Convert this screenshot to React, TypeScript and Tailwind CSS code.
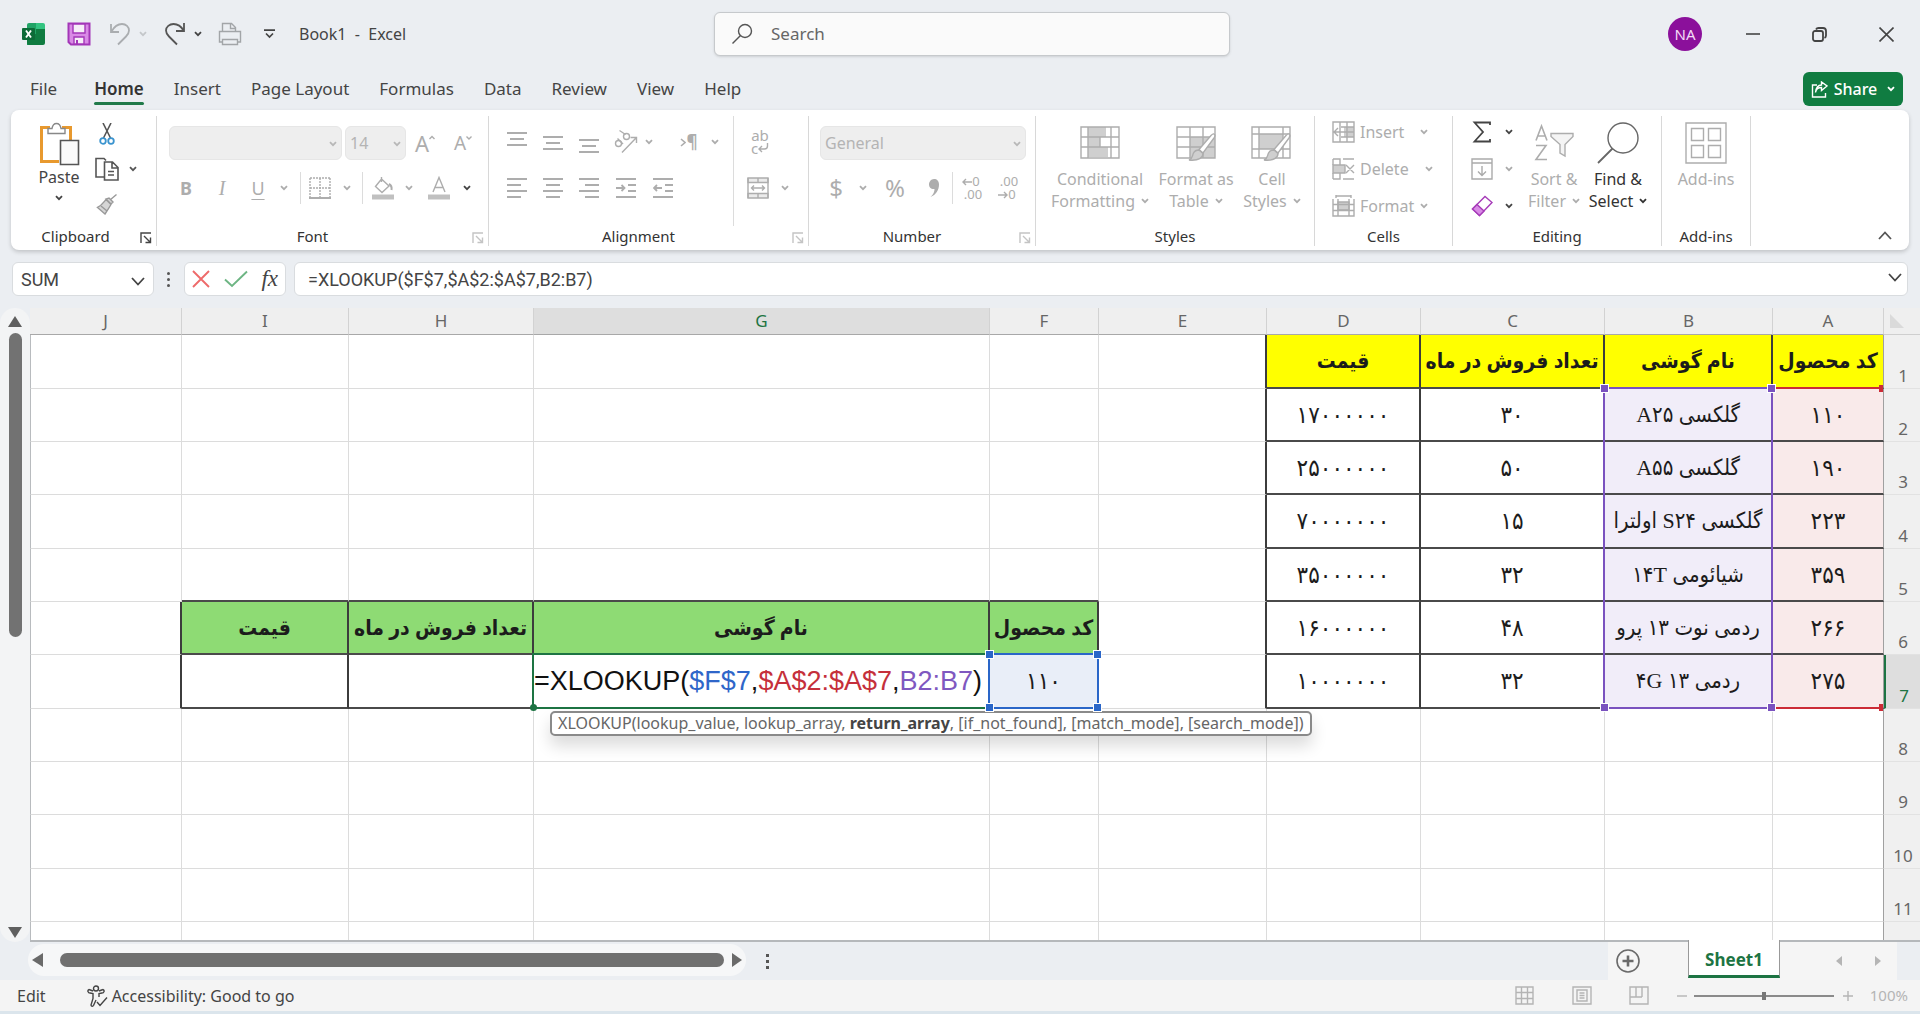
import React from "react";

const UI_FONT = "font-['Noto_Sans','Open_Sans',sans-serif]";
const CELL_FONT = "font-['Liberation_Serif','DejaVu_Sans_Condensed','DejaVu_Sans',serif]";

type IconProps = {
  w: number;
  h: number;
  className?: string;
  children: React.ReactNode;
};

const Icon: React.FC<IconProps> = ({ w, h, className = "", children }) => (
  <svg
    width={w}
    height={h}
    viewBox={`0 0 ${w} ${h}`}
    fill="none"
    stroke="currentColor"
    strokeWidth="1.4"
    className={`shrink-0 ${className}`}
    aria-hidden="true"
  >
    {children}
  </svg>
);

const Chevron: React.FC<{ className?: string }> = ({ className = "" }) => (
  <Icon w={8} h={6} className={className}>
    <path d="M1 1.2 4 4.2 7 1.2" strokeWidth="1.8" />
  </Icon>
);

type ToolProps = {
  label: string;
  className?: string;
  children: React.ReactNode;
};

const Tool: React.FC<ToolProps> = ({ label, className = "", children }) => (
  <button aria-label={label} className={`flex shrink-0 items-center justify-center ${className}`}>
    {children}
  </button>
);

type GroupProps = {
  name: string;
  className: string;
  launcher?: string;
  children: React.ReactNode;
};

const Group: React.FC<GroupProps> = ({ name, className, launcher, children }) => (
  <section
    aria-label={name}
    className={`relative mt-1.5 mb-1 flex shrink-0 flex-col border-r border-[#d8d8d8] ${className}`}
  >
    <div className="flex flex-1">{children}</div>
    <div className="flex h-5 items-center justify-center text-[15px] leading-5 text-[#333]">{name}</div>
    {launcher && (
      <button aria-label={name + " settings"} className={`absolute right-1 bottom-0.5 ${launcher}`}>
        <Icon w={12} h={12}>
          <path d="M1 11V1h10M4 4l6 6M10.500 5.500v5H5.500" />
        </Icon>
      </button>
    )}
  </section>
);

const ribbonTabs = ["Insert", "Page Layout", "Formulas", "Data", "Review", "View", "Help"];

const TitleBar: React.FC = () => (
  <header className="flex h-[68px] items-center text-[#444]">
    <div className="flex w-[714px] shrink-0 items-center pl-[22px]">
      <svg width="24" height="24" viewBox="0 0 24 24" aria-label="Excel">
        <path d="M7 1h8v22H5V3a2 2 0 0 1 2-2z" fill="#21a366" />
        <path d="M14 1h7a2 2 0 0 1 2 2v4h-9z" fill="#33c481" />
        <path d="M5 12h18v9a2 2 0 0 1-2 2H7a2 2 0 0 1-2-2z" fill="#107c41" />
        <path d="M14 7h9v5h-9z" fill="#107c41" />
        <rect x="0" y="6" width="13" height="12" rx="1" fill="#0d6b38" />
        <path d="M4 8.500l5 7M9 8.500l-5 7" stroke="#fff" strokeWidth="1.900" />
      </svg>
      <Tool label="Save" className="ml-[21px] text-[#a336b8]">
        <Icon w={24} h={24}>
          <path d="M1.500 1.500h21v21H4l-2.500-2.500z" fill="#d98ae6" strokeWidth="2" />
          <path d="M6 2h12v9H6z" fill="#f6eef8" />
          <path d="M7 22v-7h10v7z" fill="#f6eef8" />
          <path d="M10 22v-4" strokeWidth="2" />
        </Icon>
      </Tool>
      <Tool label="Undo" className="ml-[18px] text-[#aaadb0]">
        <Icon w={22} h={24}>
          <path d="M2 2v8h8M2.500 9.500C5 5 8 2 13 2c4 0 7 3 7 6.500 0 2.500-1 4-3 6L9 22.500" strokeWidth="1.800" />
        </Icon>
      </Tool>
      <Chevron className="ml-2 text-[#c4c7ca]" />
      <Tool label="Redo" className="ml-[17px] text-[#555]">
        <Icon w={22} h={24}>
          <path d="M20 1v8h-8M19.500 8.500C17 4 14 2 9.500 2 5.500 2 2 5 2 8.500c0 2.500 1 4 3 6l8 8" strokeWidth="1.800" />
        </Icon>
      </Tool>
      <Chevron className="ml-2" />
      <Tool label="Quick print" className="ml-[16px] text-[#a2a5a8]">
        <Icon w={24} h={24}>
          <path d="M4.500 9V1.500h9l4 4V9M12.500 2v4.500h5M4 20H1.500V9.500h21V20H20" />
          <path d="M4.500 17.500h15v5h-15z" />
        </Icon>
      </Tool>
      <Tool label="Customize toolbar" className="ml-[22px]">
        <Icon w={11} h={10}>
          <path d="M0 1.200h11M2 4.500l3.500 3.500L9 4.500" strokeWidth="1.700" />
        </Icon>
      </Tool>
      <span className="ml-6 text-[16px] whitespace-pre">Book1  -  Excel</span>
    </div>
    <label className="flex h-[44px] w-[516px] items-center rounded-md border border-[#c6c9cc] bg-[#fafafa] pl-4 shadow-sm">
      <Icon w={22} h={22} className="text-[#555]">
        <circle cx="14" cy="8" r="6.500" />
        <path d="M9.500 12.500 1.500 20.500" />
      </Icon>
      <input
        aria-label="Search"
        placeholder="Search"
        className="ml-[18px] flex-1 bg-transparent text-[17px] outline-none placeholder:text-[#666]"
      />
    </label>
    <div className="flex flex-1 items-center justify-end pr-[26px]">
      <button className="mr-[44px] h-[34px] w-[34px] rounded-full bg-[#8b109b] text-[15px] text-[#f3d8f6]">NA</button>
      <Tool label="Minimize" className="w-[14px]">
        <Icon w={14} h={14}>
          <path d="M0 7h14" strokeWidth="1.600" />
        </Icon>
      </Tool>
      <Tool label="Restore" className="ml-[52px]">
        <Icon w={15} h={15}>
          <rect x="1" y="4" width="10" height="10" rx="2" strokeWidth="1.800" />
          <path d="M4 2.500C4.500 1.500 5 1 6.500 1H11c2 0 3 1 3 3v4.500c0 1.500-.5 2-1.500 2.500" strokeWidth="1.800" />
        </Icon>
      </Tool>
      <Tool label="Close" className="ml-[52px]">
        <Icon w={15} h={15}>
          <path d="M.5.5l14 14M14.500.5l-14 14" strokeWidth="1.600" />
        </Icon>
      </Tool>
    </div>
  </header>
);

const MenuBar: React.FC = () => (
  <nav className="flex h-[42px] items-center pr-[17px] pl-[30px] text-[17px] text-[#444]">
    <button className="mr-[37px]">File</button>
    <button className="relative mr-[30px] font-semibold text-[#333]">
      Home
      <span className="absolute inset-x-0 -bottom-[3px] h-[3px] rounded bg-[#217a4a]" />
    </button>
    <div className="flex gap-[30px]">
      {ribbonTabs.map((tab) => (
        <button key={tab}>{tab}</button>
      ))}
    </div>
    <button className="ml-auto flex h-[34px] w-[100px] items-center justify-center gap-1.5 rounded-md bg-[#107c41] text-[16px] font-medium text-white">
      <Icon w={17} h={17}>
        <path d="M6 4H1.500v12h13v-4M4.500 11.500C5 8 7 6.500 10.500 6.500V9.500L16 5 10.500 1v3C7 4 5 7 4.500 11.500z" />
      </Icon>
      Share
      <Chevron className="ml-1" />
    </button>
  </nav>
);

const Combo: React.FC<{ label: string; value: string; className: string }> = ({ label, value, className }) => (
  <div className={`relative h-[34px] rounded-md border border-[#e6e6e6] bg-[#eee] ${className}`}>
    <select
      aria-label={label}
      disabled
      className="h-full w-full appearance-none bg-transparent pl-1 text-[16px] text-[#b4b4b4] opacity-100"
    >
      <option>{value}</option>
    </select>
    <Chevron className="pointer-events-none absolute top-[14px] right-1 text-[#b8b8b8]" />
  </div>
);

const Lines: React.FC<{ d: string }> = ({ d }) => (
  <Icon w={20} h={22}>
    <path d={d} strokeWidth="1.800" />
  </Icon>
);

const Brush = () => (
  <>
    <path d="M38 10c1.500 1 1 2.500 0 4L27 29l-4-3.500 12-14c1-1 2-2 3-1.500z" fill="#fff" />
    <path d="M23 26l4 3.500c0 4-4 7.500-14 6.500 4-1.500 3-4 4.500-7 1-2 3-3 5.500-3z" fill="#cfcfcf" />
  </>
);

const BigLabel: React.FC<{ top: string; bottom: string }> = ({ top, bottom }) => (
  <span className="mt-1.5 flex flex-col items-center text-[16px] leading-[22px] whitespace-nowrap">
    <span>{top}</span>
    <span className="flex items-center gap-1.5">
      {bottom}
      <Chevron />
    </span>
  </span>
);

const Ribbon: React.FC = () => (
  <div className="mx-[11px] flex h-[140px] rounded-lg bg-white text-[#adadad] shadow-[0_2px_4px_rgba(0,0,0,0.18)]">
    <Group name="Clipboard" className="w-[146px] pr-4" launcher="text-[#444]">
      <button className="ml-[27px] flex w-[42px] flex-col items-center pt-1.5 text-[16px] leading-[22px] text-[#444]">
        <Icon w={42} h={44}>
          <path d="M12 5.500H3.500v34H21M24 5.500h8.500V18" stroke="#e8992e" strokeWidth="3" />
          <path d="M10 11.500V6.500h4c.5-3 2-5 4.500-5s4 2 4.500 5h4v5z" fill="#fff" stroke="#888" />
          <path d="M22.500 18.500h18v24h-18z" fill="#fafafa" stroke="#555" strokeWidth="1.600" />
        </Icon>
        <span>Paste</span>
        <Chevron className="mt-[7px]" />
      </button>
      <div className="ml-[11px] flex flex-col items-start gap-[11px] pt-1.5 text-[#555]">
        <Tool label="Cut" className="h-6 w-8">
          <Icon w={16} h={22}>
            <path d="M4 0l7.500 15M12 0 4.500 15" strokeWidth="1.600" />
            <circle cx="4" cy="18" r="2.800" stroke="#3b94cf" strokeWidth="1.800" />
            <circle cx="12" cy="18" r="2.800" stroke="#3b94cf" strokeWidth="1.800" />
          </Icon>
        </Tool>
        <div className="flex items-center">
          <Tool label="Copy" className="h-6 w-8">
            <Icon w={24} h={24}>
              <path d="M9 20H1V1.500h8l2 2M9.500 5h8l5.500 5.500V23H9.500zM17 5v6h6M13 14.500h6M13 18h6" strokeWidth="1.600" />
            </Icon>
          </Tool>
          <Chevron className="ml-1.5" />
        </div>
        <Tool label="Format painter" className="h-6 w-8 text-[#999]">
          <Icon w={22} h={22}>
            <path d="M20.500 1.500 14 7M13 5l4 4-2 2-5-5zM10 6.500l5 5C13 15 11 18 9 21L1.500 14.500c4-2 6-5 8.500-8z" fill="#d6d6d6" />
            <path d="M5 13l6 5" />
          </Icon>
        </Tool>
      </div>
    </Group>

    <Group name="Font" className="w-[332px] pr-5" launcher="text-[#c4c4c4]">
      <div className="ml-3 flex flex-col pt-2.5">
        <div className="flex items-center">
          <Combo label="Font name" value="" className="w-[173px]" />
          <Combo label="Font size" value="14" className="ml-[3px] w-[61px]" />
          <Tool label="Increase font size" className="ml-2 w-[22px] text-[22px] leading-6">
            <span>A</span>
            <Icon w={6} h={16}>
              <path d="M.5 4 3 1.500 5.500 4" />
            </Icon>
          </Tool>
          <Tool label="Decrease font size" className="ml-4 w-[22px] text-[19px] leading-6">
            <span>A</span>
            <Icon w={6} h={16}>
              <path d="M.5 1.500 3 4l2.500-2.500" />
            </Icon>
          </Tool>
        </div>
        <div className="mt-3 flex h-8 items-center text-[18px]">
          <Tool label="Bold" className="w-[34px] font-bold">B</Tool>
          <Tool label="Italic" className="w-[38px] font-['Liberation_Serif',serif] text-[20px] italic">I</Tool>
          <Tool label="Underline" className="w-[34px] underline underline-offset-4">U</Tool>
          <Chevron className="mx-[5px]" />
          <span className="mx-[7px] h-8 w-px bg-[#dcdcdc]" />
          <Tool label="Borders" className="w-6">
            <Icon w={22} h={22}>
              <path d="M1 1h20M1 1v20M21 1v20M11 1v20M1 11h20" strokeDasharray="2 1" />
              <path d="M0 21h22" strokeWidth="2" />
            </Icon>
          </Tool>
          <Chevron className="mx-[11px]" />
          <span className="h-8 w-px bg-[#dcdcdc]" />
          <Tool label="Fill color" className="w-10">
            <Icon w={24} h={24}>
              <path d="M10.500 1v5M10.500 3 18 10l-7 6.500L4.500 10.500z" />
              <path d="M18 8c2 1 3 3 2.500 6" strokeWidth="2" />
              <path d="M1 21h22" strokeWidth="5" stroke="#c0c0c0" />
            </Icon>
          </Tool>
          <Chevron className="mx-0.5" />
          <Tool label="Font color" className="w-12">
            <Icon w={24} h={24}>
              <path d="M6 16 12 1.500 18 16M8 11.500h8" />
              <path d="M1 21h22" strokeWidth="5" stroke="#c0c0c0" />
            </Icon>
          </Tool>
          <Chevron className="text-[#444]" />
        </div>
      </div>
    </Group>

    <Group name="Alignment" className="w-[320px] pr-5" launcher="text-[#c4c4c4]">
      <div className="ml-[10px] flex w-[235px] shrink-0 flex-col border-r border-[#dcdcdc] pt-2">
        <div className="flex h-9 items-center">
          <Tool label="Top align" className="w-9">
            <Lines d="M0 2h20M3 8h14M0 14h20" />
          </Tool>
          <Tool label="Middle align" className="w-9">
            <Lines d="M0 6h20M3 12h14M0 18h20" />
          </Tool>
          <Tool label="Bottom align" className="w-9">
            <Lines d="M0 9h20M3 15h14M0 21h20" />
          </Tool>
          <Tool label="Orientation" className="w-[38px]">
            <Icon w={26} h={26}>
              <path d="M9 23.500 23 9M17.500 8.500H23.500V14" />
              <circle cx="5.500" cy="14.500" r="3" />
              <path d="M4.500 9.500l5.500 5.500" />
              <circle cx="13.500" cy="7.500" r="3" />
              <path d="M6.500 1.500l6 4" />
            </Icon>
          </Tool>
          <Chevron />
          <Tool label="Text direction" className="ml-5 w-8 text-[17px] font-bold">
            <Icon w={6} h={9}>
              <path d="M1 1l4 3.500L1 8" strokeWidth="1.600" />
            </Icon>
            ¶
          </Tool>
          <Chevron className="ml-1.5" />
        </div>
        <div className="mt-2.5 flex h-9 items-center">
          <Tool label="Align left" className="w-9">
            <Lines d="M0 2h20M0 8h14M0 14h20M0 20h14" />
          </Tool>
          <Tool label="Center" className="w-9">
            <Lines d="M0 2h20M3 8h14M0 14h20M3 20h14" />
          </Tool>
          <Tool label="Align right" className="w-9">
            <Lines d="M0 2h20M6 8h14M0 14h20M6 20h14" />
          </Tool>
          <Tool label="Increase indent" className="w-[38px]">
            <Lines d="M0 2h20M12 8h8M12 14h8M0 20h20M0 11h8M5.500 8 8.500 11l-3 3" />
          </Tool>
          <Tool label="Decrease indent" className="w-9">
            <Lines d="M0 2h20M12 8h8M12 14h8M0 20h20M9 11H1M4 8 1 11l3 3" />
          </Tool>
        </div>
      </div>
      <div className="ml-3 flex shrink-0 flex-col pt-2">
        <Tool label="Wrap text" className="h-9 w-7 flex-col text-[15px] leading-[13px]">
          <span>ab</span>
          <span className="flex items-center">
            c
            <Icon w={11} h={11}>
              <path d="M9.500 0v3c0 2-1 3-3 3H1M4 3 1 6l3 3" />
            </Icon>
          </span>
        </Tool>
        <div className="mt-2.5 flex h-9 items-center">
          <Tool label="Merge and center" className="w-6">
            <Icon w={22} h={22}>
              <path d="M1 1h20v4.500H1zM1 16.500h20V21H1z" fill="#ebebeb" />
              <path d="M1 1v20M21 1v20M11 1v4.500M11 16.500V21M4.500 11h13M7 8.500 4.500 11 7 13.500M15 8.500l2.500 2.500-2.500 2.500" />
            </Icon>
          </Tool>
          <Chevron className="ml-[11px]" />
        </div>
      </div>
    </Group>

    <Group name="Number" className="w-[227px] pr-5" launcher="text-[#c4c4c4]">
      <div className="ml-[11px] flex flex-col pt-2.5">
        <Combo label="Number format" value="General" className="w-[206px]" />
        <div className="mt-3 flex h-8 items-center">
          <Tool label="Currency" className="w-8 text-[24px]">$</Tool>
          <Chevron className="mx-[7px]" />
          <Tool label="Percent" className="w-[42px] text-[24px]">%</Tool>
          <Tool label="Comma style" className="w-9">
            <Icon w={12} h={20}>
              <path d="M6 1c3 0 5 2 5 5.500C11 12 8 17 2.500 19c3-3 4-5 4-8C3 11.500 1 9 1 6.500S3 1 6 1z" fill="currentColor" stroke="none" />
            </Icon>
          </Tool>
          <span className="h-8 w-px bg-[#dcdcdc]" />
          <Tool label="Increase decimal" className="w-9 flex-col text-[13px] leading-[13px]">
            <span className="flex items-center">
              <Icon w={10} h={8}>
                <path d="M10 4H1M4 1 1 4l3 3" />
              </Icon>
              0
            </span>
            <span className="pl-1">.00</span>
          </Tool>
          <Tool label="Decrease decimal" className="w-9 flex-col text-[13px] leading-[13px]">
            <span className="pl-1">.00</span>
            <span className="flex items-center">
              <Icon w={10} h={8}>
                <path d="M0 4h9M6 1l3 3-3 3" />
              </Icon>
              0
            </span>
          </Tool>
        </div>
      </div>
    </Group>

    <Group name="Styles" className="w-[279px]">
      <button className="ml-[10px] flex w-[108px] flex-col items-center pt-2">
        <Icon w={40} h={38}>
          <path d="M8 3h18v10H8zM8 13h12v10H8zM8 23h20v10H8z" fill="#cfcfcf" stroke="none" />
          <path d="M1 3h38v31H1zM8 3v31M31 3v31M1 13h38M1 23h38M20 13v10" />
        </Icon>
        <BigLabel top="Conditional" bottom="Formatting" />
      </button>
      <button className="flex w-[84px] flex-col items-center pt-2">
        <Icon w={40} h={38}>
          <path d="M14 13h25v21H14z" fill="#cfcfcf" stroke="none" />
          <path d="M1 3h38v31H1zM14 3v31M27 3v31M1 13h38M1 23h38" />
          <Brush />
        </Icon>
        <BigLabel top="Format as" bottom="Table" />
      </button>
      <button className="flex w-[68px] flex-col items-center pt-2">
        <Icon w={42} h={38}>
          <path d="M8 10h24v15H8z" fill="#cfcfcf" stroke="none" />
          <path d="M1 3h38v31H1zM8 3v31M1 10h38M1 25h38M32 3v31" />
          <Brush />
        </Icon>
        <BigLabel top="Cell" bottom="Styles" />
      </button>
    </Group>

    <Group name="Cells" className="w-[138px]">
      <div className="ml-[17px] flex flex-col gap-[13px] pt-1 text-[16px] leading-6">
        <button className="flex items-center">
          <Icon w={23} h={22}>
            <path d="M12 6h10v10H12z" fill="#cfcfcf" stroke="none" />
            <path d="M1 1h21v20H1zM8 1v20M15 1v20M9 6h13M9 16h13M22 11H2M6 7l-4 4 4 4" />
          </Icon>
          <span className="ml-[5px] w-[60px] text-left">Insert</span>
          <Chevron />
        </button>
        <button className="flex items-center">
          <Icon w={23} h={22}>
            <path d="M1 7h12v8H1z" fill="#cfcfcf" />
            <path d="M1 1h7v6M1 1v6M1 21v-6M1 21h7v-6M11 1h11M11 21h11M14 7l8 8M22 7l-8 8" />
          </Icon>
          <span className="ml-[5px] w-[65px] text-left">Delete</span>
          <Chevron />
        </button>
        <button className="flex items-center">
          <Icon w={23} h={22}>
            <path d="M6 7h11v8H6z" fill="#cfcfcf" />
            <path d="M1 4v17h21V4M6 4v17M17 4v17M1 9.500h21M1 15.500h21M4 1h15M4-1v4M19-1v4" />
          </Icon>
          <span className="ml-[5px] w-[60px] text-left">Format</span>
          <Chevron />
        </button>
      </div>
    </Group>

    <Group name="Editing" className="w-[209px]">
      <div className="ml-[18px] flex w-[42px] flex-col gap-[13px] pt-1 text-[#444]">
        <button aria-label="AutoSum" className="flex h-6 items-center justify-between">
          <Icon w={22} h={22}>
            <path d="M19 4V1.500H3.500L12 11l-8.500 9.500H19V18" strokeWidth="1.800" />
          </Icon>
          <Chevron />
        </button>
        <button aria-label="Fill" className="flex h-6 items-center justify-between text-[#aaa]">
          <Icon w={22} h={22}>
            <path d="M1 1h20v20H1zM1 5h20M11 8v9M7 13.500l4 4 4-4" />
          </Icon>
          <Chevron />
        </button>
        <button aria-label="Clear" className="flex h-6 items-center justify-between">
          <Icon w={22} h={22} className="text-[#a63bb8]">
            <path d="M1.500 14 14 1.500l7 6L8.500 20.500z" fill="#fff" />
            <path d="M1.500 14 6 9.500l7 6.500-4.500 4.500z" fill="#d98ae6" />
          </Icon>
          <Chevron />
        </button>
      </div>
      <button className="ml-3 flex w-[58px] flex-col items-center pt-2">
        <Icon w={42} h={38}>
          <path d="M3 16.500 8.500 2 14 16.500M5 12h7M3 21.500h10L3 35.500h11" strokeWidth="1.600" />
          <path d="M18 9.500h22v3l-8 8V32l-5-3v-8.500l-9-8z" fill="#f4f4f4" />
        </Icon>
        <BigLabel top="Sort &" bottom="Filter" />
      </button>
      <button className="ml-[5px] flex w-[60px] flex-col items-center pt-1.5 text-[#333]">
        <Icon w={44} h={42}>
          <circle cx="27" cy="16" r="15" stroke="#666" />
          <path d="M16.500 26.500 2 41" stroke="#666" strokeWidth="1.800" />
        </Icon>
        <span className="-mt-0.5">
          <BigLabel top="Find &" bottom="Select" />
        </span>
      </button>
    </Group>

    <Group name="Add-ins" className="w-[89px]">
      <button className="mx-auto flex flex-col items-center pt-1.5 text-[16px] leading-[22px]">
        <Icon w={42} h={42}>
          <path d="M1 1h40v40H1zM6.500 6.500h12v12h-12zM23.500 6.500h12v12h-12zM6.500 23.500h12v12h-12zM23.500 23.500h12v12h-12z" />
        </Icon>
        <span className="mt-1">Add-ins</span>
      </button>
    </Group>

    <button aria-label="Collapse ribbon" className="mt-auto mr-[17px] mb-2.5 ml-auto text-[#555]">
      <Icon w={14} h={9}>
        <path d="M1 8l6-6.500L13 8" strokeWidth="1.800" />
      </Icon>
    </button>
  </div>
);

const FormulaBar: React.FC = () => (
  <div className="mx-[12px] my-3 flex h-[34px] shrink-0 items-center text-[#444]">
    <div className="relative h-full w-[142px] rounded-md border border-[#d9dcdf] bg-white">
      <input
        aria-label="Name box"
        defaultValue="SUM"
        className="h-full w-full bg-transparent pl-2 font-['Roboto',sans-serif] text-[18px] outline-none"
      />
      <Icon w={14} h={9} className="pointer-events-none absolute top-3.5 right-2">
        <path d="M1 1l6 6.500L13 1" strokeWidth="1.800" />
      </Icon>
    </div>
    <div className="mx-[13px] flex w-1 flex-col gap-[3px]">
      <span className="h-[3px] w-[3px] rounded-full bg-[#555]" />
      <span className="h-[3px] w-[3px] rounded-full bg-[#555]" />
      <span className="h-[3px] w-[3px] rounded-full bg-[#555]" />
    </div>
    <div className="flex h-full w-[102px] items-center justify-between rounded-md border border-[#d9dcdf] bg-white px-[7px]">
      <Tool label="Cancel" className="text-[#ee6a6a]">
        <Icon w={18} h={18}>
          <path d="M1 1l16 16M17 1 1 17" strokeWidth="1.900" />
        </Icon>
      </Tool>
      <Tool label="Enter" className="text-[#6db583]">
        <Icon w={24} h={18}>
          <path d="M1 9.500 8 16 23 1.500" strokeWidth="1.900" />
        </Icon>
      </Tool>
      <Tool label="Insert function" className="font-['Liberation_Serif',serif] text-[23px] leading-6 italic">
        fx
      </Tool>
    </div>
    <div className="relative ml-2 h-full flex-1 rounded-md border border-[#d9dcdf] bg-white">
      <input
        aria-label="Formula"
        defaultValue="=XLOOKUP($F$7,$A$2:$A$7,B2:B7)"
        className="h-full w-full bg-transparent pl-[13px] font-['Roboto',sans-serif] text-[18px] outline-none"
      />
      <Icon w={14} h={9} className="pointer-events-none absolute top-2.5 right-[5px]">
        <path d="M1 1l6 6.500L13 1" strokeWidth="1.800" />
      </Icon>
    </div>
  </div>
);

// The sheet is right-to-left: column A sits at the right edge.
const columns = ["J", "I", "H", "G", "F", "E", "D", "C", "B", "A"];
const rows = [1, 2, 3, 4, 5, 6, 7, 8, 9, 10, 11];

const cells: Record<string, string> = {
  A1: "کد محصول",
  B1: "نام گوشی",
  C1: "تعداد فروش در ماه",
  D1: "قیمت",
  A2: "۱۱۰",
  B2: "گلکسی A۲۵",
  C2: "۳۰",
  D2: "۱۷۰۰۰۰۰۰",
  A3: "۱۹۰",
  B3: "گلکسی A۵۵",
  C3: "۵۰",
  D3: "۲۵۰۰۰۰۰۰",
  A4: "۲۲۳",
  B4: "گلکسی S۲۴ اولترا",
  C4: "۱۵",
  D4: "۷۰۰۰۰۰۰۰",
  A5: "۳۵۹",
  B5: "شیائومی ۱۴T",
  C5: "۳۲",
  D5: "۳۵۰۰۰۰۰۰",
  A6: "۲۶۶",
  B6: "ردمی نوت ۱۳ پرو",
  C6: "۴۸",
  D6: "۱۶۰۰۰۰۰۰",
  A7: "۲۷۵",
  B7: "ردمی ۱۳ ۴G",
  C7: "۳۲",
  D7: "۱۰۰۰۰۰۰۰",
  F6: "کد محصول",
  G6: "نام گوشی",
  H6: "تعداد فروش در ماه",
  I6: "قیمت",
  F7: "۱۱۰",
};

const inTable = (col: string | undefined, row: number) => {
  if (!col) return false;
  if ("ABCD".includes(col)) return row >= 1 && row <= 7;
  if ("FGHI".includes(col)) return row === 6 || row === 7;
  return false;
};

const cellStyle = (col: string, row: number) => {
  if (!inTable(col, row)) return "";
  if (row === 1) return "bg-[#ffff00] text-[21px] font-bold";
  if (row === 6 && "FGHI".includes(col)) return "bg-[#8edb74] text-[21px] font-bold";
  if (col === "A") return "bg-[#f9eaea] text-[24px]";
  if (col === "B") return "bg-[#f1edf9] text-[22px]";
  if (col === "F") return "bg-[#e9eef8] text-[24px]";
  return "text-[24px]";
};

const Handles: React.FC<{ color: string }> = ({ color }) => (
  <>
    <i className={`absolute -top-1 -left-1 h-[7px] w-[7px] outline outline-white ${color}`} />
    <i className={`absolute -top-1 -right-1 h-[7px] w-[7px] outline outline-white ${color}`} />
    <i className={`absolute -bottom-1 -left-1 h-[7px] w-[7px] outline outline-white ${color}`} />
    <i className={`absolute -right-1 -bottom-1 h-[7px] w-[7px] outline outline-white ${color}`} />
  </>
);

const overlays: Record<string, React.ReactNode> = {
  A2: (
    <div className="pointer-events-none absolute inset-x-0 -top-[2px] z-10 h-[322px] border-y-2 border-[#cc2b36]">
      <i className="absolute -top-1 right-0 h-[7px] w-1 bg-[#cc2b36]" />
      <i className="absolute right-0 -bottom-1 h-[7px] w-1 bg-[#cc2b36]" />
    </div>
  ),
  B2: (
    <div className="pointer-events-none absolute -inset-x-[2px] -top-[2px] z-20 h-[322px] border-2 border-[#7a52bf]">
      <Handles color="bg-[#7a52bf]" />
    </div>
  ),
  F7: (
    <div className="pointer-events-none absolute -inset-x-[2px] -inset-y-[2px] z-20 border-2 border-[#2a66c8]">
      <Handles color="bg-[#2a66c8]" />
    </div>
  ),
};

const FormulaCell: React.FC = () => (
  <div className="absolute -inset-x-[2px] -inset-y-[2px] z-10 flex items-center border-2 border-[#1d7443] bg-white">
    <span className="font-['Liberation_Sans',Arial,sans-serif] text-[27px] leading-8 whitespace-nowrap text-[#111]">
      =XLOOKUP(<span className="text-[#2f66c9]">$F$7</span>,<span className="text-[#c5303b]">$A$2:$A$7</span>,<span className="text-[#7f58c0]">B2:B7</span>)
    </span>
    <i className="absolute -bottom-1 -left-1 h-[7px] w-[7px] rounded-full bg-[#1d7443]" />
    <div
      role="tooltip"
      className={`absolute top-[56px] left-4 rounded-[5px] border-2 border-[#8a8a8a] bg-white px-1.5 text-[16px] leading-[21px] whitespace-nowrap text-[#666] shadow-[0_10px_16px_rgba(0,0,0,0.14)] ${UI_FONT}`}
    >
      XLOOKUP(lookup_value, lookup_array, <b className="text-[#444]">return_array</b>, [if_not_found], [match_mode],
      [search_mode])
    </div>
  </div>
);

const colWidth: Record<string, string> = {
  J: "",
  I: "w-[167px]",
  H: "w-[185px]",
  G: "w-[456px]",
  F: "w-[109px]",
  E: "w-[168px]",
  D: "w-[154px]",
  C: "w-[184px]",
  B: "w-[168px]",
  A: "w-[111px]",
};

const Sheet: React.FC = () => (
  <main className="flex min-h-0 flex-1">
    <div className="flex w-[30px] shrink-0 flex-col items-center rounded-full bg-[#f3f4f5] py-2 text-[#5f5f5f]">
      <Tool label="Scroll up">
        <Icon w={14} h={11}>
          <path d="M7 0l7 11H0z" fill="currentColor" stroke="none" />
        </Icon>
      </Tool>
      <div className="mt-1.5 h-[304px] w-[13px] rounded-full bg-[#727272]" />
      <Tool label="Scroll down" className="mt-auto -mb-1">
        <Icon w={14} h={11}>
          <path d="M7 11l7-11H0z" fill="currentColor" stroke="none" />
        </Icon>
      </Tool>
    </div>
    <div className="min-w-0 flex-1 overflow-hidden border-b-2 border-[#b5b8bb] bg-white">
      <table className="w-full table-fixed border-separate border-spacing-0">
        <thead>
          <tr className="h-[27px] bg-[#efefef] text-[17px] leading-6 text-[#666]">
            {columns.map((col) => (
              <th
                key={col}
                scope="col"
                className={`border-r border-b border-[#d2d2d2] border-b-[#a8a8a8] p-0 font-normal ${colWidth[col]} ${
                  col === "G" ? "bg-[#dedede] text-[#1d7443]" : ""
                }`}
              >
                {col}
              </th>
            ))}
            <th className="w-[36px] border-b border-[#cfcfcf] p-0 pl-1.5">
              <Icon w={14} h={14}>
                <path d="M0 0v14h14z" fill="#dadada" stroke="none" />
              </Icon>
            </th>
          </tr>
        </thead>
        <tbody>
          {rows.map((row) => (
            <tr key={row} className={row % 3 === 1 ? "h-[54px]" : "h-[53px]"}>
              {columns.map((col, i) => {
                const dark = inTable(col, row);
                let right = "border-r border-r-[#dcdcdc]";
                if (col === "A") right = "border-r border-r-[#a0a0a0]";
                else if (dark || inTable(columns[i + 1], row)) right = "border-r-2 border-r-[#3c3c3c]";
                const bottom =
                  dark || inTable(col, row + 1) ? "border-b-2 border-b-[#4a4a4a]" : "border-b border-b-[#dcdcdc]";
                const left = col === "J" ? "border-l border-l-[#b8bbbe]" : "";
                return (
                  <td
                    key={col}
                    className={`relative p-0 text-center leading-7 whitespace-nowrap text-[#1c1c1c] ${CELL_FONT} ${right} ${bottom} ${left} ${cellStyle(col, row)}`}
                  >
                    {cells[col + row] && <bdi dir="rtl">{cells[col + row]}</bdi>}
                    {col === "G" && row === 7 && <FormulaCell />}
                    {overlays[col + row]}
                  </td>
                );
              })}
              <th
                scope="row"
                className={`border-b border-[#e2e2e2] p-0 pl-0.5 text-center align-bottom text-[17px] leading-6 font-normal ${
                  row === 7 ? "border-l-2 border-l-[#1d7443] bg-[#dedede] text-[#1d7443]" : "bg-[#f0f0f0] text-[#666]"
                }`}
              >
                {row}
              </th>
            </tr>
          ))}
          <tr className="h-[53px]">
            {columns.map((col) => (
              <td
                key={col}
                className={`border-r p-0 ${col === "J" ? "border-l border-l-[#b8bbbe]" : ""} ${
                  col === "A" ? "border-r-[#a0a0a0]" : "border-r-[#dcdcdc]"
                }`}
              />
            ))}
            <td className="bg-[#f0f0f0]" />
          </tr>
        </tbody>
      </table>
    </div>
  </main>
);

const SheetTabs: React.FC = () => (
  <div className="flex h-[38px] shrink-0 items-start text-[#6a6a6a]">
    <div className="mt-0.5 ml-[28px] flex h-8 w-[718px] items-center rounded-full bg-[#f6f7f8] pl-1">
      <Tool label="Scroll left">
        <Icon w={11} h={14}>
          <path d="M11 0v14L0 7z" fill="currentColor" stroke="none" />
        </Icon>
      </Tool>
      <div className="ml-[17px] h-[14px] w-[664px] rounded-full bg-[#707070]" />
      <Tool label="Scroll right" className="ml-2">
        <Icon w={10} h={14}>
          <path d="M0 0v14l10-7z" fill="currentColor" stroke="none" />
        </Icon>
      </Tool>
    </div>
    <div className="mt-3 ml-5 flex flex-col gap-[3px]">
      <span className="h-[3px] w-[3px] bg-[#555]" />
      <span className="h-[3px] w-[3px] bg-[#555]" />
      <span className="h-[3px] w-[3px] bg-[#555]" />
    </div>
    <div className="mr-[23px] ml-auto flex h-full w-[289px] bg-[#f5f5f5]">
      <Tool label="New sheet" className="ml-2 h-[38px]">
        <Icon w={24} h={24}>
          <circle cx="12" cy="12" r="11" strokeWidth="1.600" />
          <path d="M12 6.500v11M6.500 12h11" strokeWidth="2.600" />
        </Icon>
      </Tool>
      <button className="relative z-10 -mt-0.5 ml-[48px] h-[38px] w-[92px] border-x border-b-[3px] border-x-[#999] border-b-[#1d7443] bg-white pt-1 text-[17px] font-bold text-[#1d7443]">
        Sheet1
      </button>
      <Tool label="Previous sheet" className="ml-[56px] h-[38px] text-[#b5b5b5]">
        <Icon w={6} h={10}>
          <path d="M6 0v10L0 5z" fill="currentColor" stroke="none" />
        </Icon>
      </Tool>
      <Tool label="Next sheet" className="ml-[33px] h-[38px] text-[#b5b5b5]">
        <Icon w={6} h={10}>
          <path d="M0 0v10l6-5z" fill="currentColor" stroke="none" />
        </Icon>
      </Tool>
    </div>
  </div>
);

const StatusBar: React.FC = () => (
  <footer className="flex h-[34px] shrink-0 items-center border-b-[3px] border-[#dbe5ec] bg-[#f4f4f4] pr-3 pl-[17px] text-[16px] text-[#444]">
    <span>Edit</span>
    <button className="ml-[41px] flex items-center gap-1">
      <Icon w={21} h={22}>
        <circle cx="9" cy="3.500" r="2.500" />
        <path d="M2 4.500C0 5.500 1 8 3 8l3 .5v5L4 20c0 1.500 2 1.500 2.500.5L9 15M16 4.500c2 1 1 3.500-1 3.500l-3 .5V12M2 4.500l4 1.500M16 4.500 12 6M10 17l3 3.500 7-8" />
      </Icon>
      Accessibility: Good to go
    </button>
    <div className="ml-auto flex items-center text-[#b4b4b4]">
      <Tool label="Normal view" className="w-5">
        <Icon w={19} h={19}>
          <path d="M1 1h17v17H1zM6.500 1v17M12.500 1v17M1 6.500h17M1 12.500h17" />
        </Icon>
      </Tool>
      <Tool label="Page layout view" className="ml-[37px] w-5">
        <Icon w={20} h={19}>
          <path d="M1 1h18v17H1zM5 4h10v11H5zM7.500 7h5M7.500 9.500h5M7.500 12h5" />
        </Icon>
      </Tool>
      <Tool label="Page break view" className="ml-[37px] w-5">
        <Icon w={20} h={19}>
          <path d="M1 1h18v17H1zM7 1v10M13 1v10M1 11h12" />
        </Icon>
      </Tool>
      <Tool label="Zoom out" className="ml-[27px] w-3">
        <Icon w={10} h={10}>
          <path d="M0 5h10" />
        </Icon>
      </Tool>
      <input
        type="range"
        aria-label="Zoom"
        className="ml-1.5 h-2 w-[140px] appearance-none bg-[linear-gradient(#8a8a8a,#8a8a8a)] bg-[length:100%_2px] bg-center bg-no-repeat [&::-webkit-slider-thumb]:h-2 [&::-webkit-slider-thumb]:w-1 [&::-webkit-slider-thumb]:appearance-none [&::-webkit-slider-thumb]:bg-[#777]"
      />
      <Tool label="Zoom in" className="ml-2 w-3">
        <Icon w={10} h={10}>
          <path d="M0 5h10M5 0v10" />
        </Icon>
      </Tool>
      <span className="ml-4 text-[15px]">100%</span>
    </div>
  </footer>
);

const App: React.FC = () => {
  return (
    <div className={`flex h-screen flex-col overflow-hidden bg-[#ebeef2] ${UI_FONT}`}>
      <TitleBar />
      <MenuBar />
      <Ribbon />
      <FormulaBar />
      <Sheet />
      <SheetTabs />
      <StatusBar />
    </div>
  );
};

export default App;
